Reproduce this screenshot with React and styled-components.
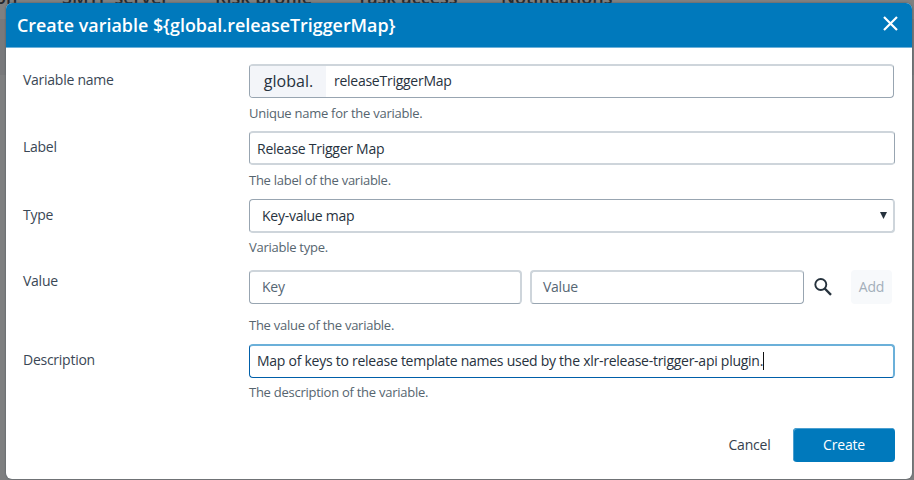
import React from "react";
import styled, { createGlobalStyle, css } from "styled-components";

const Global = createGlobalStyle`
  * { box-sizing: border-box; }
  body { margin: 0; overflow: hidden; font-family: "Open Sans", sans-serif; }
  button, input { font-family: inherit; margin: 0; }
`;

const Page = styled.div`
  position: relative;
  width: 914px;
  height: 480px;
  overflow: hidden;
  background: linear-gradient(#808080 0 19px, #78797b 19px 75px, #7e7f80 75px);
`;

const Tabs = styled.nav`
  display: flex;
  margin: -15px 0 0 -5px;
  height: 24px;
  line-height: 24px;
  font-size: 18px;
  font-weight: 600;
  color: #24272c;
  white-space: nowrap;
`;

const Tab = styled.span`
  flex: none;
  width: ${(p) => p.$width}px;
`;

const Dialog = styled.section`
  position: absolute;
  left: 6px;
  top: 3px;
  width: 906px;
  height: 476px;
  border-radius: 6px;
  overflow: hidden;
  background: #fff;
  box-shadow: 0 0 2px #46525a;
`;

const Header = styled.header`
  display: flex;
  align-items: center;
  justify-content: space-between;
  height: 45px;
  padding: 0 14px 0 11px;
  background: #0079bc;
  border-bottom: 1px solid #6db1da;
  color: #fff;
`;

const Title = styled.h1`
  margin: 0;
  font-size: 17.9px;
  font-weight: 600;
  line-height: 24px;
  white-space: nowrap;
`;

const CloseButton = styled.button`
  display: flex;
  padding: 0;
  border: 0;
  background: none;
  color: inherit;
  margin-top: -4px;
`;

const Form = styled.form`
  padding: 16px 17px 0;
`;

const Row = styled.div`
  display: grid;
  grid-template-columns: 226px 646px;
  align-content: start;
  height: ${(p) => p.$height}px;
`;

const Label = styled.label`
  font-size: 14px;
  letter-spacing: -0.26px;
  line-height: 20px;
  padding-top: ${(p) => p.$top ?? 6}px;
  color: #3a4755;
`;

const Control = styled.div`
  display: flex;
  align-items: center;
`;

const Help = styled.p`
  grid-column: 2;
  margin: ${(p) => p.$gap || 5}px 0 0;
  font-size: 13px;
  letter-spacing: -0.26px;
  line-height: 20px;
  color: #56656f;
`;

const frame = css`
  height: 34px;
  border-style: solid;
  border-color: #98a5b1;
  border-width: 1px;
  border-radius: 4px;
  background: #fff;
  ${(p) => p.$soft?.includes("t") && css`border-top: 2px solid #ced5db;`}
  ${(p) => p.$soft?.includes("b") && css`border-bottom: 2px solid #ced5db;`}
  ${(p) => p.$soft?.includes("r") && css`border-right: 2px solid #ced5db;`}
  ${(p) => p.$soft?.includes("l") && css`border-left: 2px solid #ced5db;`}
`;

const Input = styled.div`
  ${frame}
  display: flex;
  align-items: center;
  width: ${(p) => p.$width || 646}px;
  margin-right: ${(p) => p.$after || 0}px;
  padding: 0 ${(p) => p.$pad || 7}px ${(p) => (p.$raise ? 2 : 0)}px;
  font-size: 14px;
  letter-spacing: -0.26px;
  color: ${(p) => (p.$placeholder ? "#566674" : "#27323e")};
  white-space: pre;
  overflow: hidden;
  ${(p) =>
    p.$focused &&
    css`
      border-color: #6bb0d9 #6bb0d9 #005fa9 #005fa9;
      border-width: 2px 2px 1px 1px;
    `}
`;

const Prefix = styled.span`
  display: flex;
  align-items: center;
  justify-content: center;
  align-self: stretch;
  width: 76px;
  margin: 0 8px -2px -7px;
  padding: 0 0 2px 1px;
  background: #f3f5f9;
  font-size: 16px;
  letter-spacing: 0;
`;

const Arrow = styled.svg`
  margin: 0 -6px 0 auto;
`;

const Caret = styled.i`
  width: 1px;
  height: 18px;
  background: #111;
`;

const AddButton = styled.button`
  width: 41px;
  height: 34px;
  margin-left: 19px;
  padding: 0 0 1px;
  border: 0;
  border-radius: 4px;
  background: #f7f9fb;
  color: #a3afba;
  font-size: 14px;
  letter-spacing: -0.2px;
`;

const Footer = styled.footer`
  display: flex;
  justify-content: flex-end;
`;

const Action = styled.button`
  width: ${(p) => (p.$primary ? 102 : 87)}px;
  height: 34px;
  padding: 0 0 1px;
  border: 0;
  border-radius: 4px;
  background: ${(p) => (p.$primary ? "#0079bc" : "transparent")};
  box-shadow: ${(p) => (p.$primary ? "inset 1px 1px #4a9fd0" : "none")};
  color: ${(p) => (p.$primary ? "#fff" : "#35414d")};
  font-size: 14px;
  letter-spacing: -0.2px;
`;

const tabs = [["on", 67], ["SMTP server", 153], ["Risk profile", 142], ["Task access", 144], ["Notifications", 120]];

export default function App() {
  return (
    <Page>
      <Global />
      <Tabs>
        {tabs.map(([name, width]) => (
          <Tab key={name} $width={width}>{name}</Tab>
        ))}
      </Tabs>
      <Dialog>
        <Header>
          <Title>Create variable $&#123;global.releaseTriggerMap&#125;</Title>
          <CloseButton aria-label="Close">
            <svg width="15" height="15" viewBox="0 0 15 15" stroke="currentColor" strokeWidth="2.2">
              <path d="M1 1 14 14M14 1 1 14" />
            </svg>
          </CloseButton>
        </Header>
        <Form>
          <Row $height={67}>
            <Label>Variable name</Label>
            <Control>
              <Input $soft="t" $width={645} $raise><Prefix>global.</Prefix>releaseTriggerMap</Input>
            </Control>
            <Help>Unique name for the variable.</Help>
          </Row>
          <Row $height={68}>
            <Label>Label</Label>
            <Control><Input $soft="tb">Release Trigger Map</Input></Control>
            <Help>The label of the variable.</Help>
          </Row>
          <Row $height={71}>
            <Label>Type</Label>
            <Control>
              <Input $soft="br" $pad={12}>
                Key-value map
                <Arrow width="7" height="7" viewBox="0 0 7 7"><path d="M0 0h7L3.5 7z" fill="#26323d" /></Arrow>
              </Input>
            </Control>
            <Help $gap={4}>Variable type.</Help>
          </Row>
          <Row $height={74}>
            <Label $top={1}>Value</Label>
            <Control>
              <Input $soft="tr" $width={273} $pad={12} $after={8} $placeholder $raise>Key</Input>
              <Input $soft="tl" $width={274} $pad={11} $after={10} $placeholder $raise>Value</Input>
              <svg width="18" height="18" viewBox="0 0 18 18" fill="none" stroke="#26323d">
                <circle cx="6.8" cy="6.5" r="5.5" strokeWidth="1.9" />
                <path d="M10.7 10.5 17 16.8" strokeWidth="2.4" />
              </svg>
              <AddButton disabled>Add</AddButton>
            </Control>
            <Help $gap={11}>The value of the variable.</Help>
          </Row>
          <Row $height={84}>
            <Label>Description</Label>
            <Control>
              <Input $focused $raise>Map of keys to release template names used by the xlr-release-trigger-api plugin.<Caret /></Input>
            </Control>
            <Help $gap={4}>The description of the variable.</Help>
          </Row>
          <Footer>
            <Action type="button">Cancel</Action>
            <Action type="button" $primary>Create</Action>
          </Footer>
        </Form>
      </Dialog>
    </Page>
  );
}
